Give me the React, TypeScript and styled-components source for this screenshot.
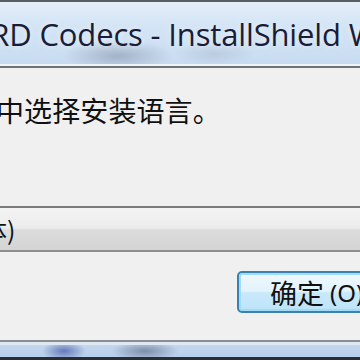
import React from "react";
import styled, { createGlobalStyle } from "styled-components";

const Global = createGlobalStyle`
  html, body { margin: 0; padding: 0; background: #f0f0f0; }
  body { width: 360px; height: 360px; overflow: hidden; }
`;

const Window = styled.div`
  width: 360px;
  height: 360px;
  overflow: hidden;
  display: flex;
  flex-direction: column;
  font-family: "Noto Sans", "Noto Sans CJK SC", sans-serif;
`;

const TitleBar = styled.div`
  flex: 0 0 auto;
  height: 62px;
  border-top: 2px solid #5a5d63;
  border-bottom: 2px solid #eef3f8;
  display: flex;
  align-items: center;
  overflow: hidden;
  white-space: nowrap;
  background:
    radial-gradient(ellipse 55px 16px at 118px 54px, rgba(90, 100, 120, 0.35), rgba(90, 100, 120, 0) 100%),
    radial-gradient(ellipse 40px 12px at 215px 52px, rgba(120, 130, 150, 0.2), rgba(120, 130, 150, 0) 100%),
    linear-gradient(180deg, #e3eef9 0%, #d3e4f5 40%, #c8dcf1 100%);
`;

const TitleText = styled.span`
  margin-left: -128px;
  padding-top: 2px;
  font-family: "Open Sans", "Noto Sans", sans-serif;
  font-size: 31px;
  letter-spacing: -0.15px;
  color: #1a1c38;
  text-shadow: 0 0 6px rgba(255, 255, 255, 0.6);
`;

const ClientEdge = styled.div`
  flex: 0 0 auto;
  height: 2px;
  background: #6f7275;
`;

const Client = styled.div`
  flex: 1 1 auto;
  background: #f0f0f0;
  display: flex;
  flex-direction: column;
  overflow: hidden;
`;

const Prompt = styled.div`
  margin-top: 24px;
  height: 36px;
  white-space: nowrap;
  overflow: hidden;
  font-family: "Noto Sans CJK SC", sans-serif;
  font-size: 28px;
  letter-spacing: 0.1px;
  line-height: 36px;
  color: #111;
`;

const Shift = styled.span<{ $offset: number }>`
  display: inline-block;
  margin-left: ${(p) => p.$offset}px;
`;

const Combo = styled.div`
  margin-top: 78px;
  height: 42px;
  border-top: 2px solid #7b7b7b;
  border-bottom: 2px solid #8f8f8f;
  background: linear-gradient(180deg, #f3f3f3 0%, #ececec 48%, #dcdcdc 52%, #d4d4d4 100%);
  display: flex;
  align-items: center;
  white-space: nowrap;
  overflow: hidden;
  font-family: "Noto Sans CJK SC", sans-serif;
  font-size: 25px;
  color: #111;
`;

const ButtonRow = styled.div`
  margin-top: 19px;
  display: flex;
  justify-content: flex-start;
  padding-left: 237px;
`;

const Button = styled.div`
  flex: 0 0 auto;
  width: 160px;
  height: 38px;
  border: 2px solid #3c7fb1;
  border-radius: 5px;
  box-shadow: inset 0 0 0 2px #9fdcf7;
  background: linear-gradient(180deg, #eef8fd 0%, #e3f3fc 48%, #c9e9fa 52%, #bde3f8 100%);
  display: flex;
  align-items: center;
  padding-left: 31px;
  white-space: nowrap;
  font-family: "Noto Sans CJK SC", sans-serif;
  font-size: 27px;
  color: #111;
`;

const Mnemonic = styled.span`
  font-family: "Noto Sans", sans-serif;
  font-size: 24px;
  margin-left: 6px;
`;

const Spacer = styled.div`
  flex: 1 1 auto;
`;

const BottomFrame = styled.div`
  flex: 0 0 auto;
  height: 18px;
  border-top: 2px solid #8a8d92;
  display: flex;
  flex-direction: column;
`;

const FrameLight = styled.div`
  height: 3px;
  background: #dfe7f0;
`;

const FrameGlass = styled.div`
  flex: 1 1 auto;
  background:
    radial-gradient(ellipse 22px 10px at 64px 50%, rgba(40, 60, 150, 0.6), rgba(40, 60, 150, 0) 100%),
    radial-gradient(ellipse 34px 10px at 145px 50%, rgba(60, 70, 100, 0.5), rgba(60, 70, 100, 0) 100%),
    linear-gradient(180deg, #c3d7ee 0%, #b7cfec 100%);
`;

const FrameOuter = styled.div`
  height: 3px;
  background: #2b2d30;
`;

export default function App() {
  return (
    <>
      <Global />
      <Window>
        <TitleBar>
          <TitleText>STANDARD Codecs - InstallShield Wizard</TitleText>
        </TitleBar>
        <ClientEdge />
        <Client>
          <Prompt>
            <Shift $offset={-4}>中选择安装语言。</Shift>
          </Prompt>
          <Combo>
            <Shift $offset={-107}>中文 (简体)</Shift>
          </Combo>
          <ButtonRow>
            <Button>
              确定<Mnemonic>(O)</Mnemonic>
            </Button>
          </ButtonRow>
          <Spacer />
        </Client>
        <BottomFrame>
          <FrameLight />
          <FrameGlass />
          <FrameOuter />
        </BottomFrame>
      </Window>
    </>
  );
}
